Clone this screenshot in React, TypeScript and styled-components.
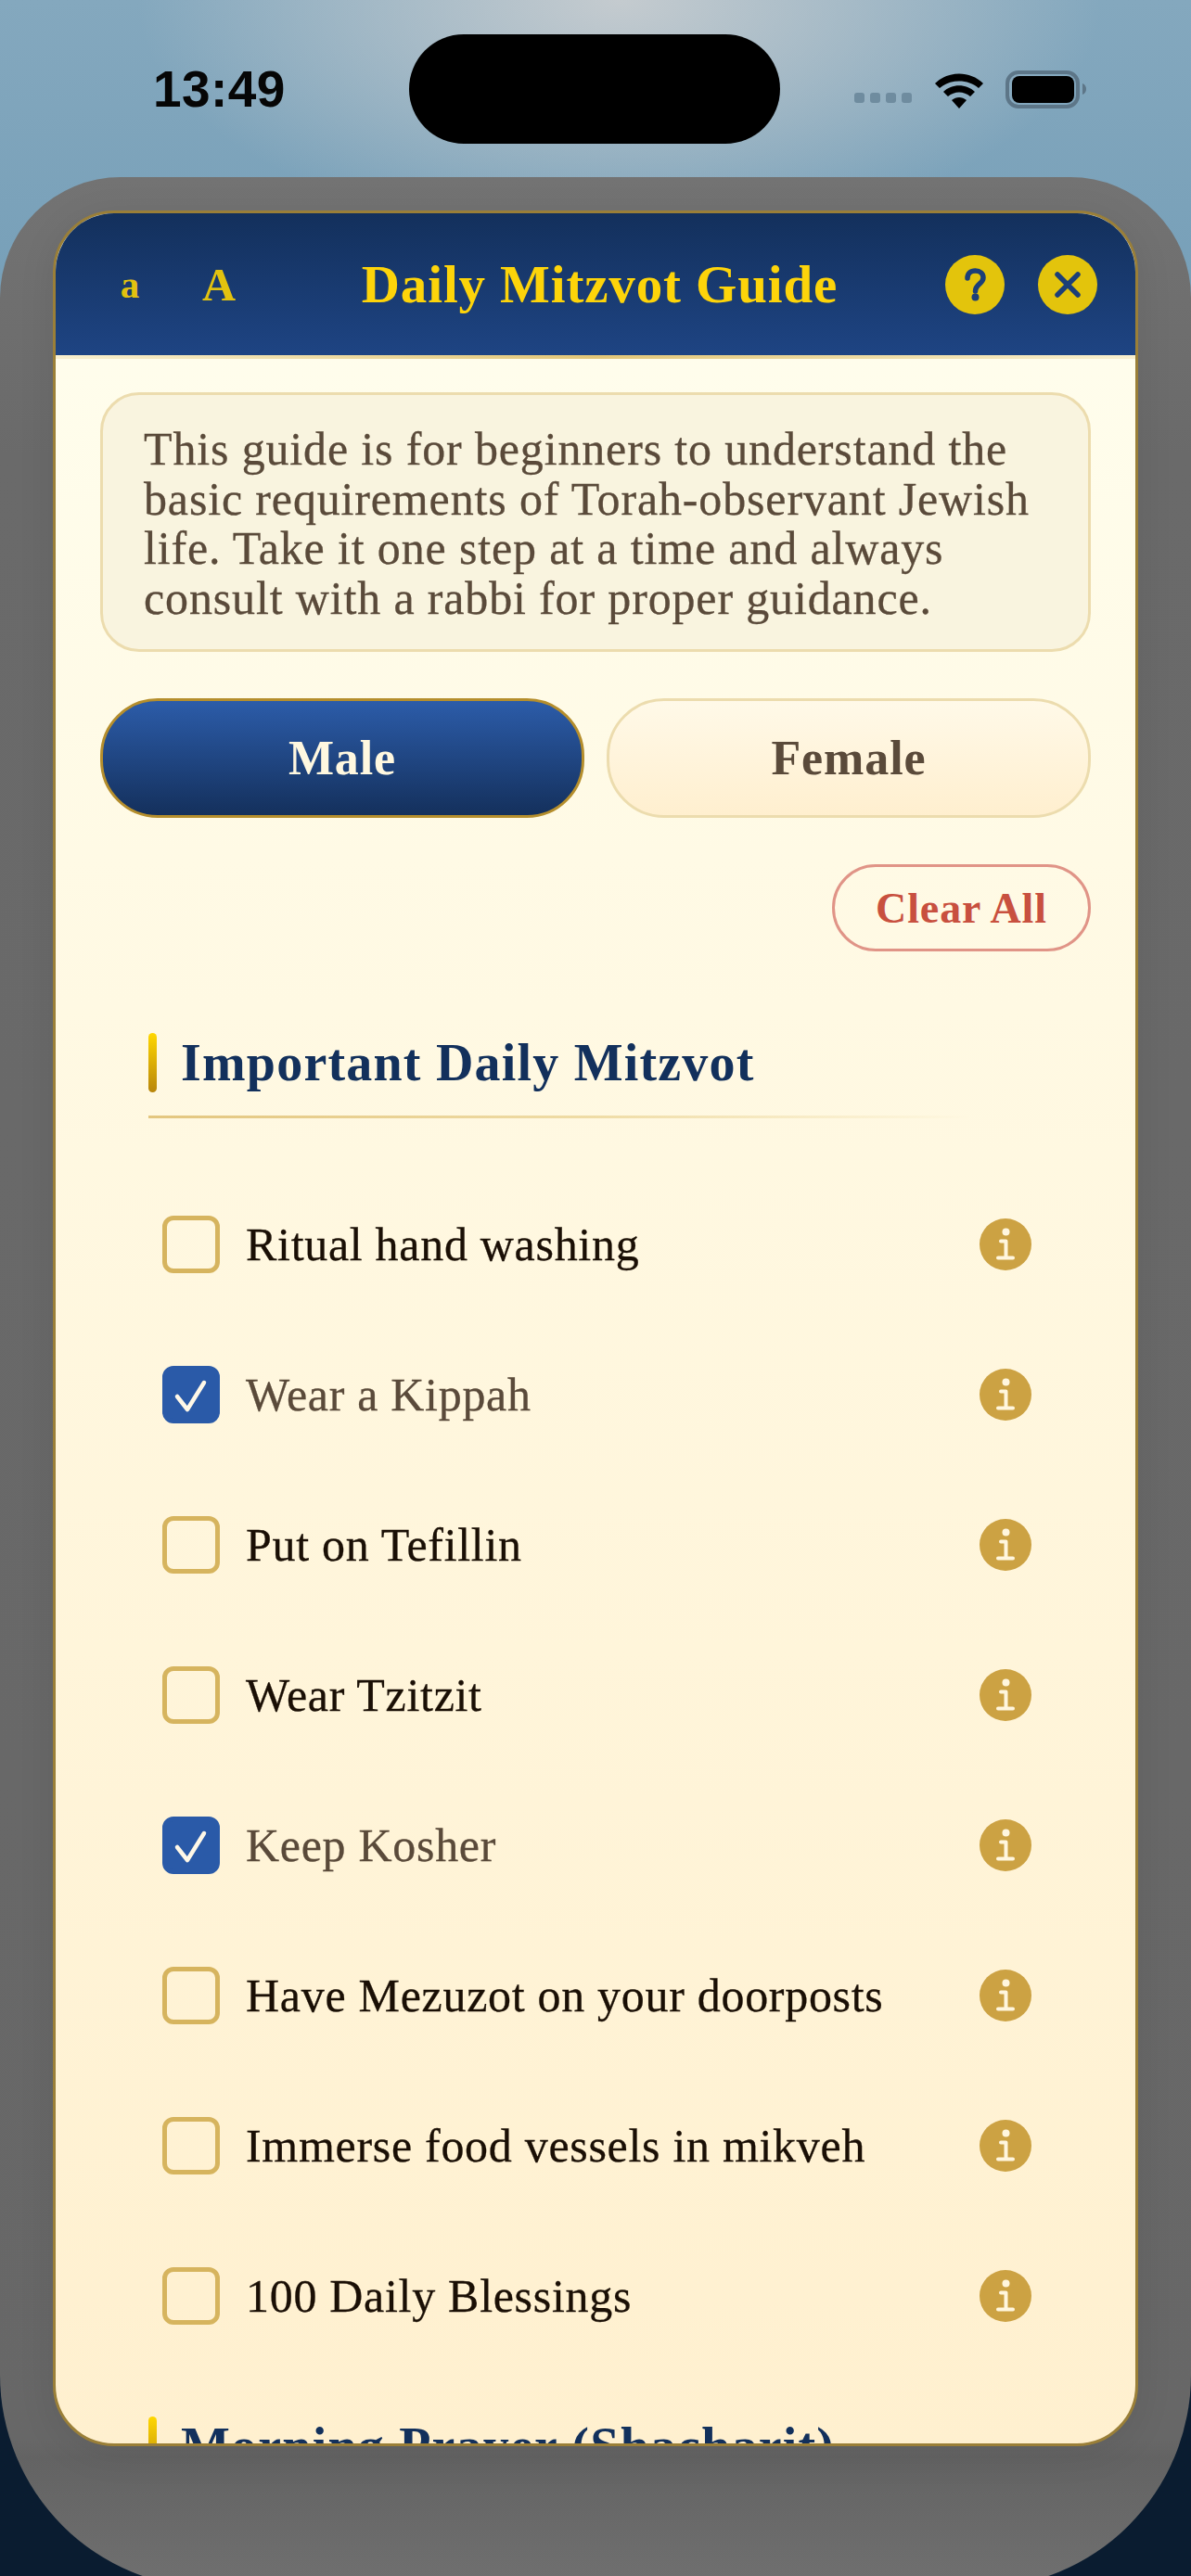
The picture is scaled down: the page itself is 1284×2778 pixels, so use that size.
import React from "react";
import styled, { createGlobalStyle } from "styled-components";

const Global = createGlobalStyle`
  html, body { margin: 0; padding: 0; background: #0a1c30; }
  * { box-sizing: border-box; }
`;

const Screen = styled.div`
  position: relative;
  width: 1284px;
  height: 2778px;
  overflow: hidden;
  font-family: "Liberation Serif", serif;
  background:
    radial-gradient(ellipse 520px 260px at 52% 0, rgba(200, 205, 208, 0.95), rgba(200, 205, 208, 0) 100%),
    linear-gradient(180deg, #84a8be 0, #769fb8 340px, #0a1c30 2300px);
`;

const StatusBar = styled.div`
  display: grid;
  grid-template-columns: 441px 400px 443px;
  height: 191px;
  align-items: start;
`;

const Time = styled.div`
  padding: 64px 0 0 165px;
  font-family: "Liberation Sans", sans-serif;
  font-weight: 700;
  font-size: 55px;
  line-height: 64px;
  color: #060606;
  letter-spacing: 0.4px;
`;

const Island = styled.div`
  margin-top: 37px;
  width: 400px;
  height: 118px;
  border-radius: 59px;
  background: #000;
`;

const StatusIcons = styled.div`
  display: flex;
  align-items: flex-start;
  padding: 76px 0 0 79px;
`;

const Shell = styled.div`
  height: 2600px;
  padding: 36px 57px 0;
  border-radius: 130px 130px 230px 230px;
  background: linear-gradient(180deg, #737373 0, #6a6a6a 300px, #676767 2440px, #636363 2460px, #707070 2600px);
`;

const Card = styled.div`
  height: 2411px;
  display: flex;
  flex-direction: column;
  overflow: hidden;
  border: 3px solid #9a7f38;
  border-radius: 66px;
  box-shadow: 0 8px 40px rgba(0, 0, 0, 0.08);
  background: linear-gradient(180deg, #fffeee 0, #fff0cf 100%);
`;

const Header = styled.header`
  flex: none;
  display: flex;
  align-items: center;
  gap: 40px;
  height: 153px;
  padding: 0 41px 0 52px;
  background: linear-gradient(180deg, #13305c 0, #1e4483 100%);
`;

const SizeButton = styled.span<{ $big?: boolean }>`
  flex: none;
  width: 56px;
  text-align: center;
  font-weight: 700;
  font-size: ${(p) => (p.$big ? "50px" : "41px")};
  color: #e2c20f;
`;

const HeaderTitle = styled.h1`
  flex: 1;
  margin: 0;
  padding-left: 6px;
  text-align: center;
  font-size: 57px;
  font-weight: 700;
  letter-spacing: 0.85px;
  color: #fdd40a;
`;

const RoundButton = styled.span`
  flex: none;
  display: flex;
  width: 64px;
  height: 64px;
  margin-left: -4px;
  border-radius: 50%;
  background: #e3c40c;
`;

const Divider = styled.div`
  flex: none;
  height: 4px;
  background: linear-gradient(90deg, #f9f0cf 0, #e2c678 50%, #f9f0cf 100%);
`;

const Body = styled.main`
  flex: 1;
  overflow: hidden;
  padding: 36px 48px 0;
`;

const Intro = styled.p`
  margin: 0;
  height: 280px;
  padding: 32px 30px 0 44px;
  border: 3px solid #ecdcae;
  border-radius: 42px;
  background: #f9f4df;
  font-size: 50px;
  line-height: 53.6px;
  letter-spacing: 0.85px;
  -webkit-text-stroke: 0.3px #5a4a3a;
  color: #5a4a3a;
`;

const Toggle = styled.div`
  display: grid;
  grid-template-columns: 1fr 1fr;
  gap: 24px;
  margin-top: 50px;
`;

const ToggleButton = styled.div<{ $active?: boolean }>`
  height: 129px;
  display: flex;
  align-items: center;
  justify-content: center;
  border-radius: 62px;
  border: 3px solid ${(p) => (p.$active ? "#b58e2c" : "#ecdcae")};
  background: ${(p) =>
    p.$active
      ? "linear-gradient(180deg, #2c5ca9 0, #14305c 100%)"
      : "linear-gradient(180deg, #fff9e8 0, #ffefcf 100%)"};
  color: ${(p) => (p.$active ? "#fff8e0" : "#5a4a3a")};
  font-size: 52px;
  font-weight: 700;
  letter-spacing: 0.9px;
`;

const ClearRow = styled.div`
  display: flex;
  justify-content: flex-end;
  margin-top: 50px;
`;

const ClearButton = styled.div`
  width: 279px;
  height: 94px;
  display: flex;
  align-items: center;
  justify-content: center;
  border: 3px solid #e09487;
  border-radius: 47px;
  color: #c8503f;
  font-size: 46px;
  font-weight: 700;
  letter-spacing: 0.9px;
`;

const Section = styled.section<{ $gap: number }>`
  margin: ${(p) => p.$gap}px 52px 0;
`;

const SectionTitle = styled.div`
  display: flex;
  align-items: center;
  gap: 26px;
  height: 64px;
`;

const TitleBar = styled.span`
  flex: none;
  width: 9px;
  height: 64px;
  border-radius: 5px;
  background: linear-gradient(180deg, #ffd700 0, #b8860b 100%);
`;

const TitleText = styled.h2`
  margin: 0;
  font-size: 56px;
  font-weight: 700;
  white-space: nowrap;
  letter-spacing: 1.2px;
  color: #12305c;
`;

const SectionRule = styled.div`
  height: 3px;
  margin-top: 25px;
  background: linear-gradient(90deg, #e3c67f 0, #efdca6 50%, rgba(239, 220, 166, 0) 92%);
`;

const List = styled.ul`
  list-style: none;
  margin: 55px 0 0;
  padding: 0;
`;

const Row = styled.li`
  display: flex;
  align-items: center;
  height: 162px;
  padding: 0 12px 0 15px;
`;

const Box = styled.span<{ $checked?: boolean }>`
  flex: none;
  display: flex;
  width: 62px;
  height: 62px;
  border-radius: 12px;
  border: 5px solid ${(p) => (p.$checked ? "#2a5aa8" : "#d6b45e")};
  background: ${(p) => (p.$checked ? "#2a5aa8" : "transparent")};
`;

const RowText = styled.span<{ $checked?: boolean }>`
  flex: 1;
  margin-left: 28px;
  font-size: 50px;
  letter-spacing: 0.7px;
  -webkit-text-stroke: 0.3px ${(p) => (p.$checked ? "#5a4a3a" : "#1a0f05")};
  color: ${(p) => (p.$checked ? "#5a4a3a" : "#1a0f05")};
`;

const items: [string, boolean][] = [
  ["Ritual hand washing", false],
  ["Wear a Kippah", true],
  ["Put on Tefillin", false],
  ["Wear Tzitzit", false],
  ["Keep Kosher", true],
  ["Have Mezuzot on your doorposts", false],
  ["Immerse food vessels in mikveh", false],
  ["100 Daily Blessings", false],
];

const InfoIcon = () => (
  <svg width="56" height="56" viewBox="0 0 56 56">
    <circle cx="28" cy="28" r="28" fill="#cca243" />
    <circle cx="28.5" cy="14.5" r="4" fill="#fff6de" />
    <path d="M23 24.5h5.5v18M20 42.5h16" fill="none" stroke="#fff6de" strokeWidth="4" strokeLinecap="round" strokeLinejoin="round" />
  </svg>
);

const Check = () => (
  <svg width="52" height="52" viewBox="0 0 52 52">
    <path d="M11 28l11 14L40 13" fill="none" stroke="#fff8e7" strokeWidth="4.5" strokeLinecap="round" strokeLinejoin="round" />
  </svg>
);

export default function App() {
  return (
    <Screen>
      <Global />
      <StatusBar>
        <Time>13:49</Time>
        <Island />
        <StatusIcons>
          <svg width="64" height="22" viewBox="0 0 64 22" style={{ marginTop: 24 }}>
            <g fill="#6f8c9f">
              <rect x="1" y="0" width="11" height="11" rx="3" />
              <rect x="18" y="0" width="11" height="11" rx="3" />
              <rect x="35" y="0" width="11" height="11" rx="3" />
              <rect x="52" y="0" width="11" height="11" rx="3" />
            </g>
          </svg>
          <svg width="56" height="42" viewBox="0 0 56 42" style={{ marginLeft: 22, marginTop: 1 }}>
            <path d="M2 13C16 -1 40 -1 54 13L49 18C38 8 18 8 7 18Z" fill="#000" />
            <path d="M11 22C20 13 36 13 45 22L40 27C33 21 23 21 16 27Z" fill="#000" />
            <path d="M20 31C25 27 31 27 36 31L28 40Z" fill="#000" />
          </svg>
          <svg width="90" height="44" viewBox="0 0 90 44" style={{ marginLeft: 22 }}>
            <rect x="2" y="2" width="76" height="37" rx="12" fill="none" stroke="#5d7688" strokeWidth="4" />
            <rect x="7" y="6" width="67" height="29" rx="8" fill="#000" />
            <path d="M83 14c3 1 4 4 4 6s-1 5-4 6Z" fill="#5d7688" />
          </svg>
        </StatusIcons>
      </StatusBar>
      <Shell>
        <Card>
          <Header>
            <SizeButton>a</SizeButton>
            <SizeButton $big>A</SizeButton>
            <HeaderTitle>Daily Mitzvot Guide</HeaderTitle>
            <RoundButton>
              <svg width="64" height="64" viewBox="0 0 64 64">
                <path d="M24 25c0-5 3.500-8 8.500-8s8.500 3 8.500 7.500c0 6.500-8.500 7-8.500 14.500" fill="none" stroke="#1c3f78" strokeWidth="5.5" strokeLinecap="round" />
                <circle cx="32.500" cy="45.500" r="4" fill="#1c3f78" />
              </svg>
            </RoundButton>
            <RoundButton>
              <svg width="64" height="64" viewBox="0 0 64 64">
                <path d="M21 21l22 22M43 21L21 43" fill="none" stroke="#1c3f78" strokeWidth="5.5" strokeLinecap="round" />
              </svg>
            </RoundButton>
          </Header>
          <Divider />
          <Body>
            <Intro>
              This guide is for beginners to understand the basic requirements of Torah-observant Jewish life. Take it one step at a time and always consult with a rabbi for proper guidance.
            </Intro>
            <Toggle>
              <ToggleButton $active>Male</ToggleButton>
              <ToggleButton>Female</ToggleButton>
            </Toggle>
            <ClearRow>
              <ClearButton>Clear All</ClearButton>
            </ClearRow>
            <Section $gap={88}>
              <SectionTitle>
                <TitleBar />
                <TitleText>Important Daily Mitzvot</TitleText>
              </SectionTitle>
              <SectionRule />
              <List>
                {items.map(([label, checked]) => (
                  <Row key={label}>
                    <Box $checked={checked}>{checked && <Check />}</Box>
                    <RowText $checked={checked}>{label}</RowText>
                    <InfoIcon />
                  </Row>
                ))}
              </List>
            </Section>
            <Section $gap={49}>
              <SectionTitle>
                <TitleBar />
                <TitleText>Morning Prayer (Shacharit)</TitleText>
              </SectionTitle>
            </Section>
          </Body>
        </Card>
      </Shell>
    </Screen>
  );
}
